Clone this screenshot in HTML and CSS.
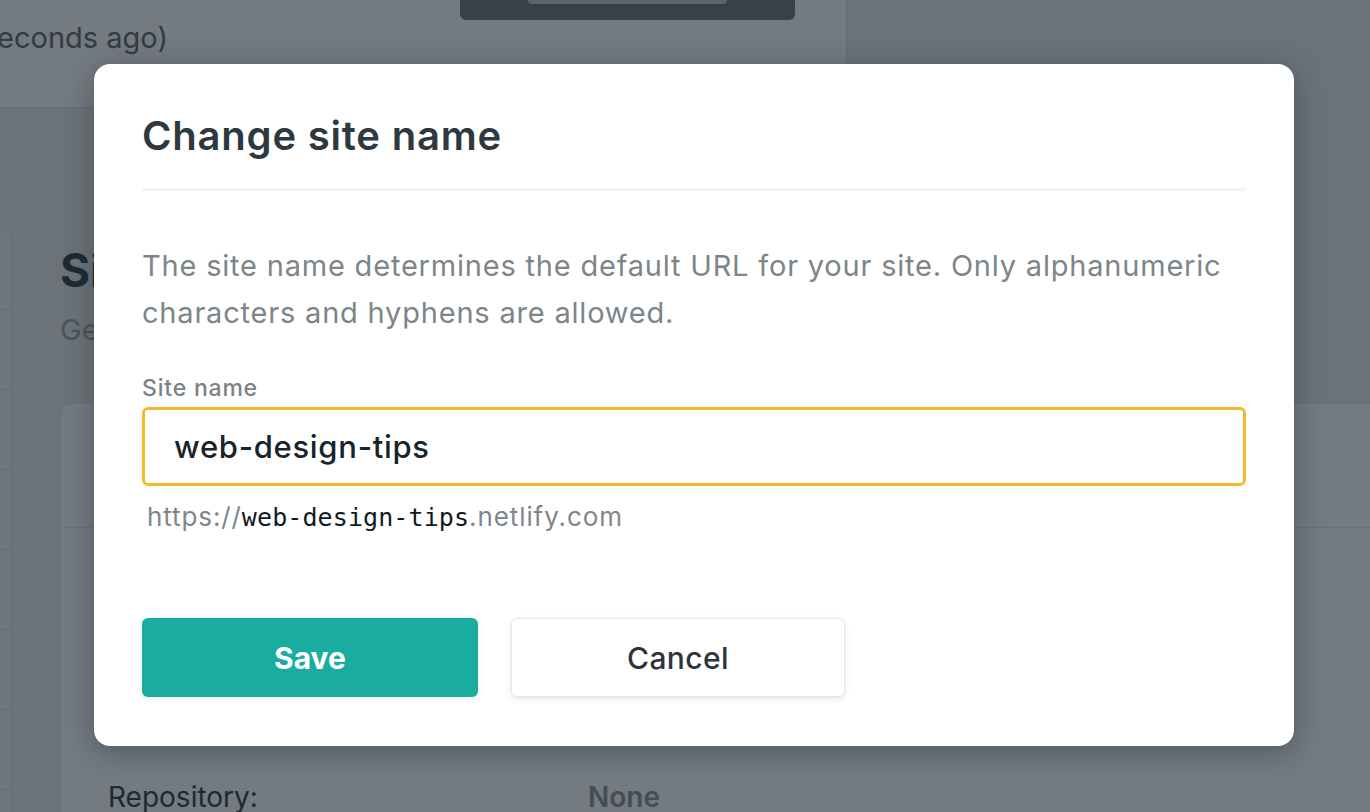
FILE: index.html
```html
<!DOCTYPE html>
<html lang="en">
<head>
<meta charset="utf-8">
<title>Change site name</title>
<link rel="stylesheet" href="styles.css">
</head>
<body>
<div class="page">
  <div class="topbar">
    <div class="deploy-panel">
      <div class="deploy-meta"><span>Published deploy (a few seconds ago)</span></div>
      <div class="preview-tab"><div class="preview-pill"></div></div>
    </div>
  </div>
  <div class="layout">
    <nav class="sidenav">
      <div class="nav-item"></div>
      <div class="nav-item"></div>
      <div class="nav-item"></div>
      <div class="nav-item"></div>
      <div class="nav-item"></div>
      <div class="nav-item"></div>
      <div class="nav-item"></div>
      <div class="nav-item"></div>
    </nav>
    <main class="content">
      <h1 class="page-title">Site details</h1>
      <p class="page-sub">General information about your site</p>
      <section class="panel">
        <div class="panel-head"></div>
        <div class="panel-body">
          <div class="info-row"><span class="info-label">Repository:</span><span class="info-value">None</span></div>
        </div>
      </section>
    </main>
  </div>
</div>

<div class="backdrop">
  <div class="modal" role="dialog" aria-labelledby="modal-title">
    <h2 class="modal-title" id="modal-title">Change site name</h2>
    <p class="modal-desc">The site name determines the default URL for your site. Only alphanumeric characters and hyphens are allowed.</p>
    <label class="field-label" for="site-name">Site name</label>
    <div class="field-input"><span id="site-name">web-design-tips</span></div>
    <p class="field-hint">https://<code>web-design-tips</code>.netlify.com</p>
    <div class="actions">
      <button class="btn btn-primary">Save</button>
      <button class="btn btn-secondary">Cancel</button>
    </div>
  </div>
</div>
</body>
</html>
```

FILE: styles.css
```css
* { box-sizing: border-box; }
html, body { margin: 0; padding: 0; }
body {
  width: 1370px;
  height: 812px;
  overflow: hidden;
  background: #6b7379;
  font-family: Inter, "Noto Sans", "Liberation Sans", sans-serif;
  position: relative;
}

/* underlying page (already dimmed by the overlay) */
.page { display: flex; flex-direction: column; height: 812px; overflow: hidden; }
.topbar { display: flex; height: 108px; flex-shrink: 0; }
.deploy-panel {
  width: 848px;
  background: #737a80;
  border-bottom: 1px solid #676e74;
  border-right: 2px solid #697076;
  display: flex;
  align-items: flex-start;
}
.deploy-meta {
  width: 168px;
  display: flex;
  justify-content: flex-end;
  white-space: nowrap;
  margin-top: 20px;
  font-size: 29px;
  line-height: 36px;
  color: #333b41;
}
.preview-tab {
  margin-left: 292px;
  width: 335px;
  height: 20px;
  background: #394048;
  border-radius: 0 0 6px 6px;
  display: flex;
  justify-content: center;
}
.preview-pill {
  width: 199px;
  height: 4px;
  background: #5d656b;
  border-radius: 0 0 6px 6px;
}

.layout { display: flex; margin-top: 122px; flex: 1; min-height: 0; }
.sidenav {
  width: 11px;
  flex-shrink: 0;
  background: #6f767c;
  border: 1px solid #676e74;
  border-left: none;
  border-bottom: none;
  border-radius: 0 6px 0 0;
  display: flex;
  flex-direction: column;
  overflow: hidden;
}
.nav-item { height: 80px; flex-shrink: 0; border-bottom: 1px solid #656c72; }
.nav-item:first-child { height: 79px; }
.content { flex: 1; padding-left: 49px; display: flex; flex-direction: column; }
.page-title {
  margin: 12px 0 0;
  font-size: 46px;
  line-height: 56px;
  font-weight: 700;
  color: #1f2a31;
}
.page-sub {
  margin: 12px 0 0;
  font-size: 29px;
  line-height: 40px;
  color: #4b5459;
}
.panel {
  margin-top: 53px;
  flex: 1;
  background: #737a80;
  border: 1px solid #6a7177;
  border-right: none;
  border-bottom: none;
  border-radius: 12px 0 0 0;
  overflow: hidden;
}
.panel-head { height: 124px; border-bottom: 1px solid #697076; }
.panel-body { padding: 251px 0 0 47px; }
.info-row { display: flex; font-size: 28px; line-height: 36px; }
.info-label { width: 480px; color: #1f292f; }
.info-value { color: #454d53; font-weight: 600; }

/* modal */
.backdrop {
  position: absolute;
  inset: 0;
  display: flex;
  justify-content: center;
  align-items: flex-start;
  padding-top: 64px;
}
.modal {
  width: 1200px;
  margin-left: 18px;
  background: #fff;
  border-radius: 16px;
  box-shadow: 0 6px 28px rgba(20, 30, 36, 0.35);
  padding: 48px 48px 49px 48px;
}
.modal-title {
  margin: 0;
  font-size: 40px;
  line-height: 48px;
  font-weight: 600;
  color: #2d393f;
  letter-spacing: 0.8px;
  padding-bottom: 28px;
  border-bottom: 3px solid #f3f4f5;
}
.modal-desc {
  margin: 51px 0 0;
  font-size: 29px;
  line-height: 47px;
  color: #7d858a;
  letter-spacing: 0.8px;
}
.field-label {
  display: block;
  margin-top: 37px;
  font-size: 23px;
  line-height: 30px;
  color: #7a8287;
  font-weight: 500;
  letter-spacing: 0.8px;
}
.field-input {
  margin-top: 4px;
  height: 79px;
  border: 3px solid #f7b92c;
  border-radius: 6px;
  padding-left: 29px;
  display: flex;
  align-items: center;
  font-size: 31px;
  font-weight: 500;
  letter-spacing: 0.7px;
  color: #18242a;
}
.field-hint {
  margin: 15px 0 0 5px;
  font-size: 26px;
  line-height: 32px;
  color: #7f868b;
  letter-spacing: 0.9px;
}
.field-hint code {
  font-family: "DejaVu Sans Mono", "Liberation Mono", monospace;
  font-size: 25px;
  letter-spacing: 0.1px;
  color: #111a1f;
}
.actions {
  margin-top: 84px;
  display: flex;
  gap: 33px;
}
.btn {
  height: 79px;
  border-radius: 6px;
  font-family: inherit;
  font-size: 30px;
  cursor: pointer;
}
.btn-primary {
  width: 336px;
  border: none;
  background: #1aad9f;
  color: #fff;
  font-weight: 700;
  box-shadow: 0 2px 6px rgba(0, 0, 0, 0.08);
}
.btn-secondary {
  width: 334px;
  background: #fff;
  border: 1px solid #e4e6e7;
  color: #2b353b;
  font-weight: 500;
  letter-spacing: 0.4px;
  box-shadow: 0 2px 6px rgba(0, 0, 0, 0.1);
}
```
